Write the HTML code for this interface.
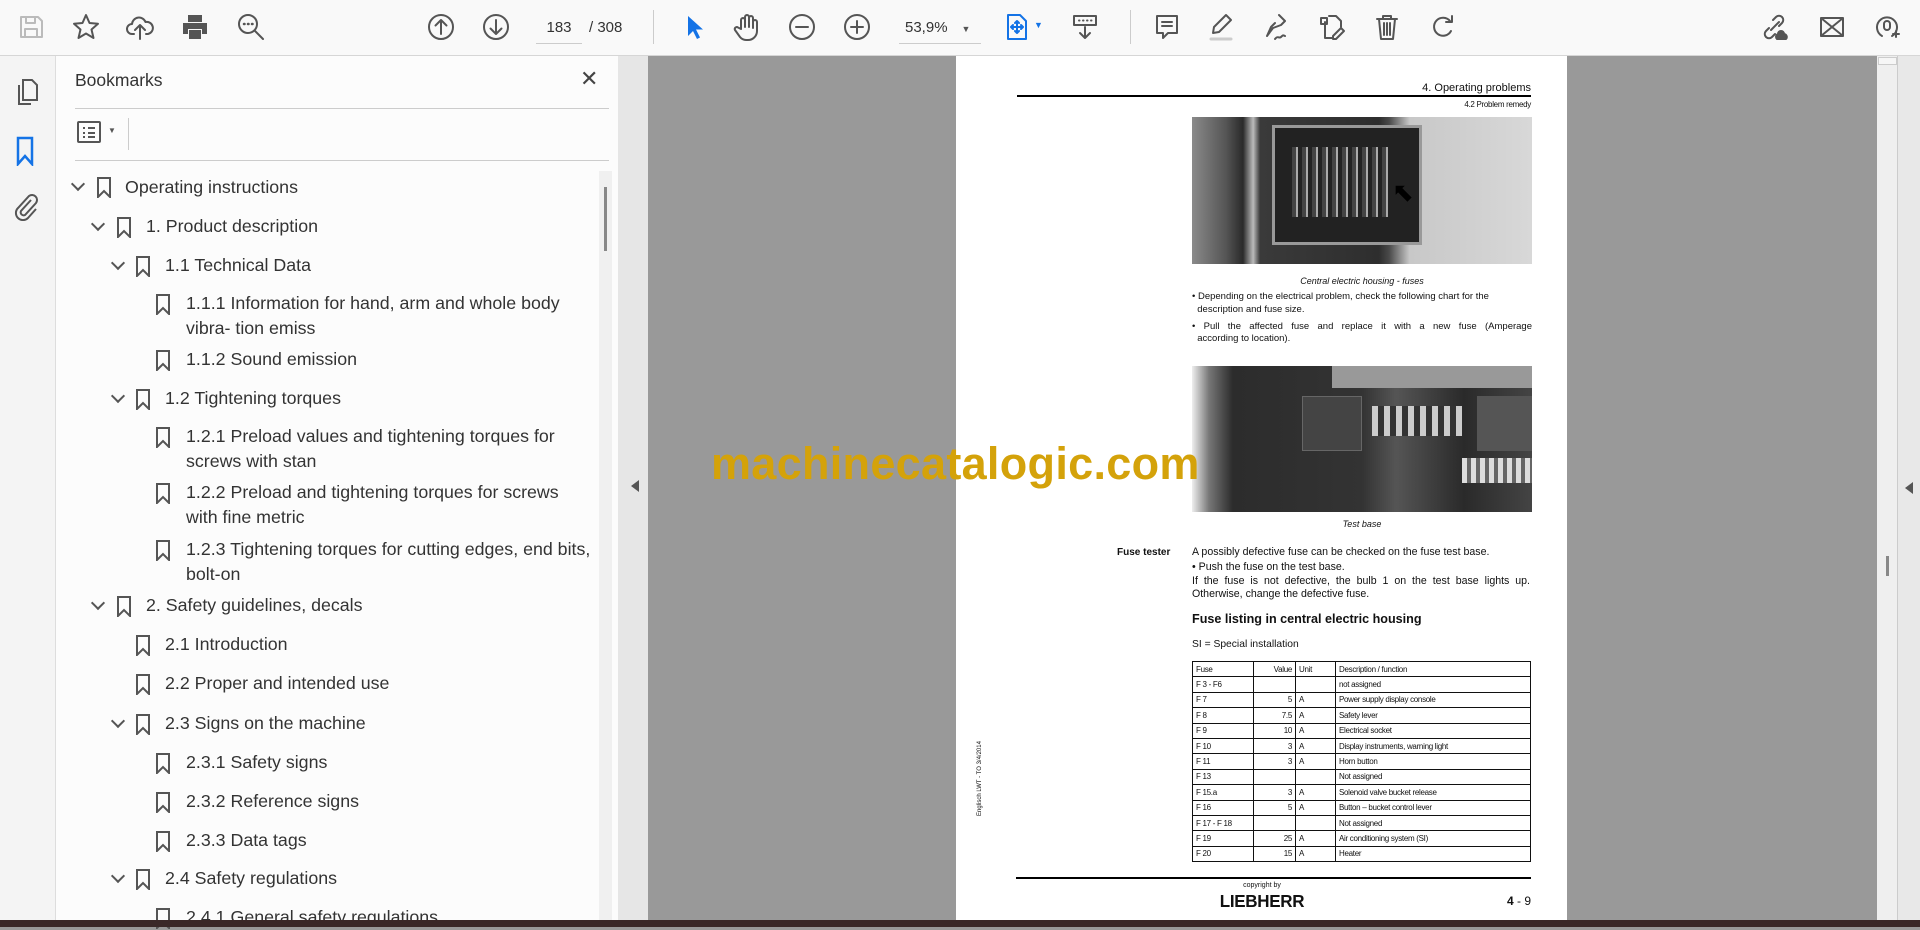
<!DOCTYPE html>
<html><head><meta charset="utf-8"><style>
*{margin:0;padding:0;box-sizing:border-box}
body{width:1920px;height:927px;overflow:hidden;background:#999;font-family:"Liberation Sans",sans-serif;position:relative}
.abs{position:absolute}
#tb{left:0;top:0;width:1920px;height:56px;background:#f9f9f9;border-bottom:1px solid #d6d6d6}
.ic{position:absolute;top:12px;width:30px;height:30px}
.ic svg{width:30px;height:30px;fill:none;stroke:#555;stroke-width:2;stroke-linecap:round;stroke-linejoin:round}
#rail{left:0;top:56px;width:56px;height:864px;background:#f4f4f4;border-right:1px solid #ddd}
#panel{left:56px;top:56px;width:562px;height:864px;background:#fcfcfc}
.bm{position:absolute;font-size:17.8px;color:#333;line-height:25px;white-space:nowrap}
.chev{position:absolute;width:10px;height:10px;border-right:2px solid #555;border-bottom:2px solid #555;transform:rotate(45deg)}
.flag{position:absolute;width:14px;height:21px}
#page{left:956px;top:56px;width:611px;height:864px;background:#fff}
.pt{position:absolute;font-size:10px;color:#111;line-height:13px}
table{border-collapse:collapse;font-size:8px;color:#111}
td{border:1px solid #111;height:15.4px;padding:0 3px;white-space:nowrap;letter-spacing:-0.3px}
</style></head><body>
<div id="tb" class="abs">
<div class="ic" style="left:16px"><svg viewBox="0 0 30 30" style="stroke:#bbb"><path d="M5 5h17l4 4v16H5z M10 5v6h9V5 M9 25v-8h12v8"/></svg></div>
<div class="ic" style="left:71px"><svg viewBox="0 0 30 30"><path d="M15 3l3.5 8 8.5.8-6.5 5.7 2 8.5L15 21.5 7.5 26l2-8.5L3 11.8l8.5-.8z"/></svg></div>
<div class="ic" style="left:125px"><svg viewBox="0 0 30 30"><path d="M9 22H7a5 5 0 010-10 7 7 0 0113.5-2A5.5 5.5 0 0123 22h-2 M15 27V13 M10 18l5-5 5 5"/></svg></div>
<div class="ic" style="left:180px"><svg viewBox="0 0 30 30" style="fill:#555;stroke:none"><path d="M8 3h14v7H8z M3 11h24v11h-5v-5H8v5H3z M9 18h12v9H9z" /></svg></div>
<div class="ic" style="left:236px"><svg viewBox="0 0 30 30"><circle cx="12" cy="12" r="9"/><path d="M18.5 18.5L27 27"/><path d="M8 12h.5M12 12h.5M16 12h.5" stroke-width="2.5"/></svg></div>
<div class="ic" style="left:426px"><svg viewBox="0 0 30 30"><circle cx="15" cy="15" r="12"/><path d="M15 22V8M9.5 13.5L15 8l5.5 5.5"/></svg></div>
<div class="ic" style="left:481px"><svg viewBox="0 0 30 30"><circle cx="15" cy="15" r="12"/><path d="M15 8v14M9.5 16.5L15 22l5.5-5.5"/></svg></div>
<div class="abs" style="left:536px;top:16px;width:46px;height:28px;border-bottom:1px solid #ccc;font-size:15px;color:#333;text-align:center;line-height:24px">183</div>
<div class="abs" style="left:589px;top:16px;font-size:15px;color:#333;line-height:24px">/ 308</div>
<div class="abs" style="left:653px;top:10px;width:1px;height:34px;background:#ccc"></div>
<div class="ic" style="left:678px"><svg viewBox="0 0 30 30" style="fill:#1473e6;stroke:none"><path d="M10 4v20l5-5 4 8 3-1.5-4-8h7z"/></svg></div>
<div class="ic" style="left:732px"><svg viewBox="0 0 30 30"><path d="M9 17V8a2 2 0 014 0v7V5a2 2 0 014 0v10V6a2 2 0 014 0v10-6a2 2 0 014 0v9a9 9 0 01-9 9h-2a8 8 0 01-6-3l-5-7a2 2 0 013-2.5z"/></svg></div>
<div class="ic" style="left:787px"><svg viewBox="0 0 30 30"><circle cx="15" cy="15" r="12"/><path d="M9 15h12"/></svg></div>
<div class="ic" style="left:842px"><svg viewBox="0 0 30 30"><circle cx="15" cy="15" r="12"/><path d="M9 15h12M15 9v12"/></svg></div>
<div class="abs" style="left:899px;top:16px;width:82px;height:28px;border-bottom:1px solid #ccc;font-size:15px;color:#333;line-height:24px;padding-left:6px">53,9%<span style="font-size:9px;margin-left:14px;color:#555">▼</span></div>
<div class="ic" style="left:1002px"><svg viewBox="0 0 30 30" style="stroke:#1473e6"><path d="M6 3h12l6 6v18H6z M15 9v12M9 15h12M13 11l2-2 2 2M13 19l2 2 2-2M11 13l-2 2 2 2M19 13l2 2-2 2"/></svg></div>
<div class="abs" style="left:1034px;top:20px;font-size:9px;color:#1473e6">▼</div>
<div class="ic" style="left:1070px"><svg viewBox="0 0 30 30"><path d="M4 4h22v9H4z M15 15v11M10 21l5 5 5-5 M9 8.5h.5M13 8.5h.5M17 8.5h.5M21 8.5h.5"/></svg></div>
<div class="abs" style="left:1130px;top:10px;width:1px;height:34px;background:#ccc"></div>
<div class="ic" style="left:1152px"><svg viewBox="0 0 30 30"><path d="M5 4h20v17h-9l-5 5v-5H5z M10 10h10M10 14h10"/></svg></div>
<div class="ic" style="left:1206px"><svg viewBox="0 0 30 30"><path d="M20 3l5 5-12 12-6 1 1-6z"/><path d="M5 27h20" stroke="#ccc" stroke-width="3"/></svg></div>
<div class="ic" style="left:1261px"><svg viewBox="0 0 30 30"><path d="M18 3l6 6-4 4-8 3-6 8 6-8 M6 24l4-9 4-4 M14 27c3-4 4 0 6-2s2-2 4-1"/></svg></div>
<div class="ic" style="left:1317px"><svg viewBox="0 0 30 30"><path d="M12 4h7l5 5v6 M8 10v16h8 M4 6h6v6H4z M24 16l3 3-8 8h-3v-3z"/></svg></div>
<div class="ic" style="left:1372px"><svg viewBox="0 0 30 30"><path d="M5 7h20M11 7V4h8v3M7 7l2 20h12l2-20M12 11v12M15 11v12M18 11v12"/></svg></div>
<div class="ic" style="left:1429px"><svg viewBox="0 0 30 30"><path d="M22 19a9 9 0 11-1-10M23 4v6h-6"/></svg></div>
<div class="ic" style="left:1759px"><svg viewBox="0 0 30 30"><path d="M12 18l8-8M14 8l3-3a4 4 0 016 6l-3 3M16 22l-3 3a4 4 0 01-6-6l3-3"/><path d="M18 27h9a3 3 0 00-2-5 3 3 0 00-6 0 3 3 0 00-1 5z" fill="#555"/></svg></div>
<div class="ic" style="left:1817px"><svg viewBox="0 0 30 30"><path d="M4 6h22v18H4z M4 6l22 18M26 6L4 24"/></svg></div>
<div class="ic" style="left:1872px"><svg viewBox="0 0 30 30"><path d="M10 24a10 10 0 1110 0 M12 12a3 3 0 016 0v3a3 3 0 01-6 0z M21 22h6M24 19v6"/></svg></div>
</div>

<div id="rail" class="abs">
<svg class="abs" style="left:14px;top:22px" width="26" height="28" viewBox="0 0 26 28" fill="none" stroke="#555" stroke-width="2"><path d="M9 2h9l5 5v15H9z M5 7v19h12"/></svg>
<svg class="abs" style="left:15px;top:80px" width="20" height="30" viewBox="0 0 20 30" fill="none" stroke="#1473e6" stroke-width="2.5"><path d="M3 2h14v26l-7-8-7 8z"/></svg>
<svg class="abs" style="left:12px;top:135px" width="28" height="30" viewBox="0 0 28 30" fill="none" stroke="#555" stroke-width="2"><path d="M19 9L9 20a3 3 0 004 4l11-12a5 5 0 00-7-7L6 17a7 7 0 0010 10l8-9"/></svg>
</div>

<div id="panel" class="abs">
<div class="abs" style="left:19px;top:14px;font-size:17.5px;color:#333">Bookmarks</div>
<div class="abs" style="left:524px;top:10px;font-size:22px;color:#444">✕</div>
<div class="abs" style="left:19px;top:52px;width:534px;height:1px;background:#ccc"></div>
<svg class="abs" style="left:21px;top:65px" width="24" height="22" viewBox="0 0 24 22" fill="none" stroke="#555" stroke-width="2"><rect x="1" y="1" width="22" height="20" rx="1"/><path d="M6 7h2M6 12h2M6 16h2M11 7h7M11 12h7M11 16h7"/></svg>
<div class="abs" style="left:52px;top:70px;font-size:8px;color:#555">▼</div>
<div class="abs" style="left:72px;top:62px;width:1px;height:32px;background:#ccc"></div>
<div class="abs" style="left:19px;top:104px;width:534px;height:1px;background:#ccc"></div>
<div class="abs" style="left:543px;top:115px;width:13px;height:749px;background:#f0f0f0"></div>
<div class="abs" style="left:548px;top:131px;width:3px;height:64px;background:#888"></div>
</div>

<div id="bms">
<div class="chev" style="left:73px;top:179px"></div><svg class="flag" style="left:97px;top:177px" viewBox="0 0 14 21" fill="none" stroke="#555" stroke-width="2"><path d="M1 1h12v19l-6-6-6 6z"/></svg><div class="bm" style="left:125px;top:175px">Operating instructions</div>
<div class="chev" style="left:93px;top:219px"></div><svg class="flag" style="left:117px;top:217px" viewBox="0 0 14 21" fill="none" stroke="#555" stroke-width="2"><path d="M1 1h12v19l-6-6-6 6z"/></svg><div class="bm" style="left:146px;top:214px">1. Product description</div>
<div class="chev" style="left:113px;top:258px"></div><svg class="flag" style="left:136px;top:256px" viewBox="0 0 14 21" fill="none" stroke="#555" stroke-width="2"><path d="M1 1h12v19l-6-6-6 6z"/></svg><div class="bm" style="left:165px;top:253px">1.1 Technical Data</div>
<svg class="flag" style="left:156px;top:294px" viewBox="0 0 14 21" fill="none" stroke="#555" stroke-width="2"><path d="M1 1h12v19l-6-6-6 6z"/></svg><div class="bm" style="left:186px;top:291px">1.1.1 Information for hand, arm and whole body<br>vibra- tion emiss</div>
<svg class="flag" style="left:156px;top:350px" viewBox="0 0 14 21" fill="none" stroke="#555" stroke-width="2"><path d="M1 1h12v19l-6-6-6 6z"/></svg><div class="bm" style="left:186px;top:347px">1.1.2 Sound emission</div>
<div class="chev" style="left:113px;top:391px"></div><svg class="flag" style="left:136px;top:389px" viewBox="0 0 14 21" fill="none" stroke="#555" stroke-width="2"><path d="M1 1h12v19l-6-6-6 6z"/></svg><div class="bm" style="left:165px;top:386px">1.2 Tightening torques</div>
<svg class="flag" style="left:156px;top:427px" viewBox="0 0 14 21" fill="none" stroke="#555" stroke-width="2"><path d="M1 1h12v19l-6-6-6 6z"/></svg><div class="bm" style="left:186px;top:424px">1.2.1 Preload values and tightening torques for<br>screws with stan</div>
<svg class="flag" style="left:156px;top:483px" viewBox="0 0 14 21" fill="none" stroke="#555" stroke-width="2"><path d="M1 1h12v19l-6-6-6 6z"/></svg><div class="bm" style="left:186px;top:480px">1.2.2 Preload and tightening torques for screws<br>with fine metric</div>
<svg class="flag" style="left:156px;top:540px" viewBox="0 0 14 21" fill="none" stroke="#555" stroke-width="2"><path d="M1 1h12v19l-6-6-6 6z"/></svg><div class="bm" style="left:186px;top:537px">1.2.3 Tightening torques for cutting edges, end bits,<br>bolt-on</div>
<div class="chev" style="left:93px;top:598px"></div><svg class="flag" style="left:117px;top:596px" viewBox="0 0 14 21" fill="none" stroke="#555" stroke-width="2"><path d="M1 1h12v19l-6-6-6 6z"/></svg><div class="bm" style="left:146px;top:593px">2. Safety guidelines, decals</div>
<svg class="flag" style="left:136px;top:635px" viewBox="0 0 14 21" fill="none" stroke="#555" stroke-width="2"><path d="M1 1h12v19l-6-6-6 6z"/></svg><div class="bm" style="left:165px;top:632px">2.1 Introduction</div>
<svg class="flag" style="left:136px;top:674px" viewBox="0 0 14 21" fill="none" stroke="#555" stroke-width="2"><path d="M1 1h12v19l-6-6-6 6z"/></svg><div class="bm" style="left:165px;top:671px">2.2 Proper and intended use</div>
<div class="chev" style="left:113px;top:716px"></div><svg class="flag" style="left:136px;top:714px" viewBox="0 0 14 21" fill="none" stroke="#555" stroke-width="2"><path d="M1 1h12v19l-6-6-6 6z"/></svg><div class="bm" style="left:165px;top:711px">2.3 Signs on the machine</div>
<svg class="flag" style="left:156px;top:753px" viewBox="0 0 14 21" fill="none" stroke="#555" stroke-width="2"><path d="M1 1h12v19l-6-6-6 6z"/></svg><div class="bm" style="left:186px;top:750px">2.3.1 Safety signs</div>
<svg class="flag" style="left:156px;top:792px" viewBox="0 0 14 21" fill="none" stroke="#555" stroke-width="2"><path d="M1 1h12v19l-6-6-6 6z"/></svg><div class="bm" style="left:186px;top:789px">2.3.2 Reference signs</div>
<svg class="flag" style="left:156px;top:831px" viewBox="0 0 14 21" fill="none" stroke="#555" stroke-width="2"><path d="M1 1h12v19l-6-6-6 6z"/></svg><div class="bm" style="left:186px;top:828px">2.3.3 Data tags</div>
<div class="chev" style="left:113px;top:871px"></div><svg class="flag" style="left:136px;top:869px" viewBox="0 0 14 21" fill="none" stroke="#555" stroke-width="2"><path d="M1 1h12v19l-6-6-6 6z"/></svg><div class="bm" style="left:165px;top:866px">2.4 Safety regulations</div>
<svg class="flag" style="left:156px;top:908px" viewBox="0 0 14 21" fill="none" stroke="#555" stroke-width="2"><path d="M1 1h12v19l-6-6-6 6z"/></svg><div class="bm" style="left:186px;top:905px">2.4.1 General safety regulations</div>
</div>

<div class="abs" style="left:618px;top:56px;width:30px;height:864px;background:#e6e6e6"></div>
<div class="abs" style="left:631px;top:480px;width:0;height:0;border-top:6px solid transparent;border-bottom:6px solid transparent;border-right:8px solid #555"></div>

<div id="page" class="abs">
<div class="pt" style="right:36px;top:26px;font-size:11px">4. Operating problems</div>
<div class="abs" style="left:61px;top:39px;width:514px;height:1.5px;background:#000"></div>
<div class="pt" style="right:36px;top:42px;font-size:8px;letter-spacing:-0.3px">4.2 Problem remedy</div>
<div class="abs" style="left:236px;top:61px;width:340px;height:147px;background:linear-gradient(90deg,#8a8a8a 0,#555 10%,#2a2a2a 15%,#bbb 18%,#3a3a3a 20%,#2e2e2e 55%,#4a4a4a 58%,#c8c8c8 64%,#d8d8d8 100%);overflow:hidden">
<div class="abs" style="left:80px;top:8px;width:150px;height:120px;background:#222;border:3px solid #999"></div>
<div class="abs" style="left:100px;top:30px;width:100px;height:70px;background:repeating-linear-gradient(90deg,#444 0 4px,#aaa 4px 6px,#222 6px 10px)"></div>
<div class="abs" style="left:200px;top:60px;font-size:26px;color:#000">⬉</div>
</div>
<div class="pt" style="left:236px;width:340px;top:219px;text-align:center;font-style:italic;font-size:9px">Central electric housing - fuses</div>
<div class="pt" style="left:236px;top:234px;width:340px;text-align:justify;font-size:9.5px">• Depending on the electrical problem, check the following chart for the<br>&nbsp;&nbsp;description and fuse size.</div>
<div class="pt" style="left:236px;top:264px;width:340px;font-size:9.5px;text-align:justify;text-align-last:justify">• Pull the affected fuse and replace it with a new fuse (Amperage</div>
<div class="pt" style="left:236px;top:276px;font-size:9.5px">&nbsp;&nbsp;according to location).</div>
<div class="abs" style="left:236px;top:310px;width:340px;height:146px;background:linear-gradient(90deg,#eee 0,#777 5%,#2c2c2c 12%,#333 50%,#555 60%,#2a2a2a 80%,#444 100%);overflow:hidden">
<div class="abs" style="left:110px;top:30px;width:60px;height:55px;background:#444;border:1px solid #666"></div>
<div class="abs" style="left:180px;top:40px;width:90px;height:30px;background:repeating-linear-gradient(90deg,#ccc 0 6px,#333 6px 12px)"></div>
<div class="abs" style="left:285px;top:30px;width:55px;height:55px;background:#555"></div>
<div class="abs" style="left:140px;top:0;width:200px;height:22px;background:#999"></div>
<div class="abs" style="left:270px;top:92px;width:70px;height:25px;background:repeating-linear-gradient(90deg,#ddd 0 5px,#666 5px 9px)"></div>
</div>
<div class="pt" style="left:236px;width:340px;top:462px;text-align:center;font-style:italic;font-size:9px">Test base</div>
<div class="pt" style="left:161px;top:490px;font-weight:bold;font-size:10px">Fuse tester</div>
<div class="pt" style="left:236px;top:490px;font-size:10.6px">A possibly defective fuse can be checked on the fuse test base.</div>
<div class="pt" style="left:236px;top:505px;font-size:10.6px">• Push the fuse on the test base.</div>
<div class="pt" style="left:236px;top:519px;width:338px;font-size:10.6px;text-align:justify;text-align-last:justify">If the fuse is not defective, the bulb 1 on the test base lights up.</div>
<div class="pt" style="left:236px;top:532px;font-size:10.6px">Otherwise, change the defective fuse.</div>
<div class="pt" style="left:236px;top:557px;font-weight:bold;font-size:12.6px">Fuse listing in central electric housing</div>
<div class="pt" style="left:236px;top:582px;font-size:10.3px">SI = Special installation</div>
<table class="abs" style="left:236px;top:605px;width:339px">
<tr><td style="width:61px">Fuse</td><td style="width:42px;text-align:right">Value</td><td style="width:40px">Unit</td><td>Description / function</td></tr>
<tr><td>F 3 - F6</td><td></td><td></td><td>not assigned</td></tr>
<tr><td>F 7</td><td style="text-align:right">5</td><td>A</td><td>Power supply display console</td></tr>
<tr><td>F 8</td><td style="text-align:right">7.5</td><td>A</td><td>Safety lever</td></tr>
<tr><td>F 9</td><td style="text-align:right">10</td><td>A</td><td>Electrical socket</td></tr>
<tr><td>F 10</td><td style="text-align:right">3</td><td>A</td><td>Display instruments, warning light</td></tr>
<tr><td>F 11</td><td style="text-align:right">3</td><td>A</td><td>Horn button</td></tr>
<tr><td>F 13</td><td></td><td></td><td>Not assigned</td></tr>
<tr><td>F 15.a</td><td style="text-align:right">3</td><td>A</td><td>Solenoid valve bucket release</td></tr>
<tr><td>F 16</td><td style="text-align:right">5</td><td>A</td><td>Button – bucket control lever</td></tr>
<tr><td>F 17 - F 18</td><td></td><td></td><td>Not assigned</td></tr>
<tr><td>F 19</td><td style="text-align:right">25</td><td>A</td><td>Air conditioning system (SI)</td></tr>
<tr><td>F 20</td><td style="text-align:right">15</td><td>A</td><td>Heater</td></tr>
</table>
<div class="abs" style="left:0;top:810px;width:611px;height:54px;background:#fff"></div>
<div class="pt" style="left:18px;top:760px;font-size:6px;transform:rotate(-90deg);transform-origin:left top;white-space:nowrap">Englisch LWT - TO 3/4/2014</div>
<div class="abs" style="left:60px;top:821px;width:515px;height:1.5px;background:#000"></div>
<div class="pt" style="left:266px;width:80px;top:823px;text-align:center;font-size:7px">copyright by</div>
<div class="pt" style="left:256px;width:100px;top:838px;text-align:center;font-size:17px;font-weight:900;letter-spacing:-0.3px;line-height:16px;transform:scaleY(1.05)">LIEBHERR</div>
<div class="pt" style="right:36px;top:839px;font-size:12px"><b>4</b> - 9</div>
</div>

<div class="abs" style="left:711px;top:438px;font-size:45px;font-weight:bold;color:#d4a20a;letter-spacing:0.3px">machinecatalogic.com</div>

<div class="abs" style="left:1877px;top:56px;width:21px;height:864px;background:#efefef;border-right:1px solid #ccc"></div>
<div class="abs" style="left:1878px;top:57px;width:19px;height:8px;border:1px solid #ccc;background:#f6f6f6"></div>
<div class="abs" style="left:1886px;top:556px;width:3px;height:20px;background:#888"></div>
<div class="abs" style="left:1898px;top:56px;width:22px;height:864px;background:#e8e8e8"></div>
<div class="abs" style="left:1905px;top:482px;width:0;height:0;border-top:6px solid transparent;border-bottom:6px solid transparent;border-right:8px solid #555"></div>
<div class="abs" style="left:0;top:920px;width:1920px;height:7px;background:#3a2828"></div>
</body></html>
